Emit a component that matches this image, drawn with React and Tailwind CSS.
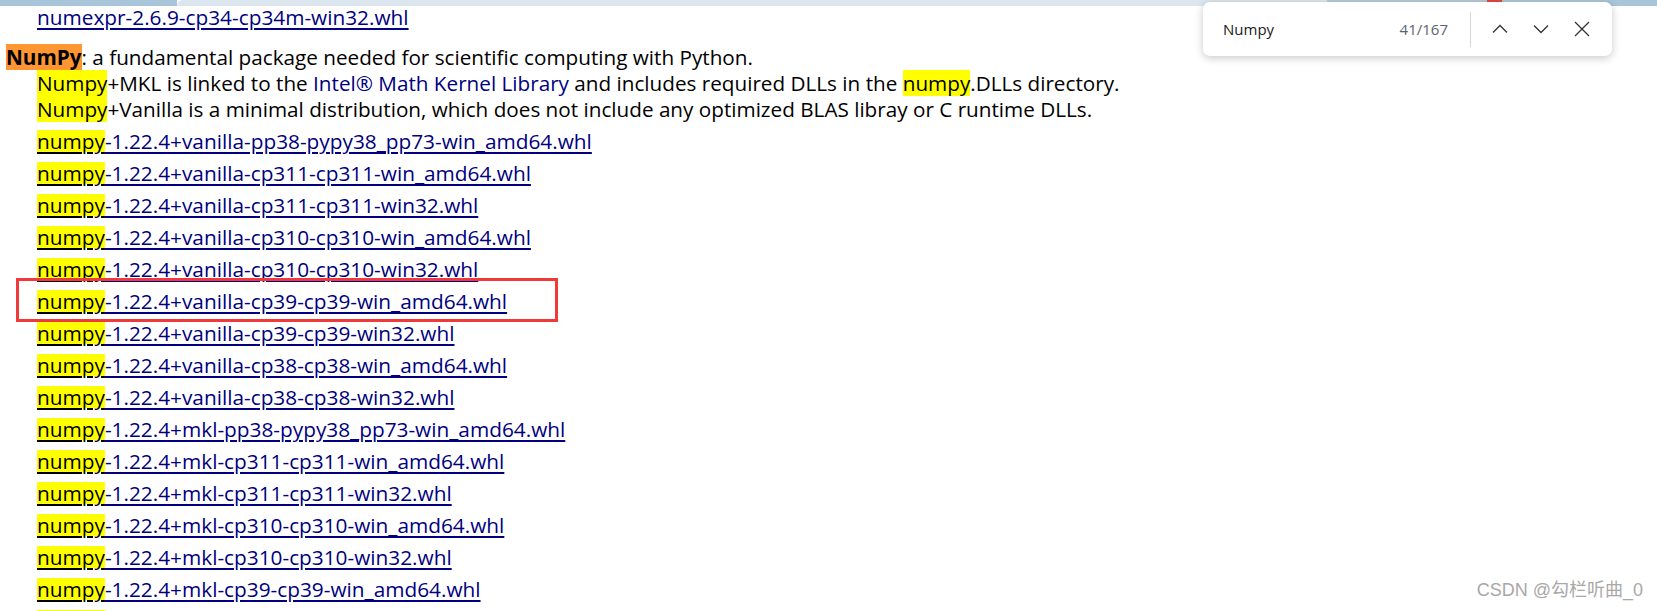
import React from "react";

const rows = [
  "-1.22.4+vanilla-pp38-pypy38_pp73-win_amd64.whl",
  "-1.22.4+vanilla-cp311-cp311-win_amd64.whl",
  "-1.22.4+vanilla-cp311-cp311-win32.whl",
  "-1.22.4+vanilla-cp310-cp310-win_amd64.whl",
  "-1.22.4+vanilla-cp310-cp310-win32.whl",
  "-1.22.4+vanilla-cp39-cp39-win_amd64.whl",
  "-1.22.4+vanilla-cp39-cp39-win32.whl",
  "-1.22.4+vanilla-cp38-cp38-win_amd64.whl",
  "-1.22.4+vanilla-cp38-cp38-win32.whl",
  "-1.22.4+mkl-pp38-pypy38_pp73-win_amd64.whl",
  "-1.22.4+mkl-cp311-cp311-win_amd64.whl",
  "-1.22.4+mkl-cp311-cp311-win32.whl",
  "-1.22.4+mkl-cp310-cp310-win_amd64.whl",
  "-1.22.4+mkl-cp310-cp310-win32.whl",
  "-1.22.4+mkl-cp39-cp39-win_amd64.whl",
  "-1.22.4+mkl-cp39-cp39-win32.whl",
];

function Row({ rest, boxed }) {
  return (
    <div className="relative h-[32px] leading-[32px] whitespace-nowrap">
      <a className="underline decoration-[1.6px] underline-offset-[3px] text-[#000080] decoration-[#000080]">
        <span className="inline-block h-[22px] leading-[22px] bg-[#ffff00] text-black underline decoration-[1.6px] underline-offset-[3px] decoration-black">numpy</span>
        {rest}
      </a>
      {boxed && (
        <div className="absolute left-[-21px] top-[-7px] w-[542px] h-[44px] border-[3px] border-[#f03a3a]" />
      )}
    </div>
  );
}

export default function App() {
  return (
    <div className="relative w-[1657px] h-[611px] overflow-hidden bg-white font-['Open_Sans',sans-serif] text-black">
      {/* browser chrome strip */}
      <div className="flex h-[6px]">
        <div className="w-[177px] bg-[#a9c5da]" />
        <div className="w-[1150px] bg-[#dce6ee] rounded-tl-[6px]" />
        <div className="w-[160px] bg-[#b4c9d8]" />
        <div className="w-[15px] bg-[#e5473f]" />
        <div className="flex-1 bg-[#a9c5da]" />
      </div>

      <div className="pl-[37px] h-[22px] leading-[22px] text-[20.8px] whitespace-nowrap">
        <a className="text-[#000080] underline decoration-[1.6px] underline-offset-[3px]">numexpr-2.6.9-cp34-cp34m-win32.whl</a>
      </div>

      <div className="mt-[16px] text-[20.7px] leading-[26px] whitespace-nowrap">
        <div className="pl-[6px]">
          <span className="inline-block h-[26px] bg-[#ff9632] font-bold">NumPy</span>
          : a fundamental package needed for scientific computing with Python.
        </div>
        <div className="pl-[37px]">
          <span className="inline-block h-[26px] bg-[#ffff00]">Numpy</span>
          +MKL is linked to the <span className="text-[#000080]">Intel® Math Kernel Library</span> and includes required DLLs in the{" "}
          <span className="inline-block h-[26px] bg-[#ffff00]">numpy</span>.DLLs directory.
        </div>
        <div className="pl-[37px]">
          <span className="inline-block h-[26px] bg-[#ffff00]">Numpy</span>
          +Vanilla is a minimal distribution, which does not include any optimized BLAS libray or C runtime DLLs.
        </div>
      </div>

      <div className="mt-[3px] pl-[37px] text-[20.8px]">
        {rows.map((r, i) => (
          <Row key={i} rest={r} boxed={i === 5} />
        ))}
      </div>

      {/* find bar */}
      <div className="absolute left-[1203px] top-[2px] w-[409px] h-[54px] bg-white rounded-[7px] shadow-[0_2px_8px_rgba(0,0,0,0.22)] flex items-center font-['Open_Sans',sans-serif]">
        <div className="flex-1 pl-[20px] text-[15px] text-[#1a1a1a]">Numpy</div>
        <div className="text-[15px] text-[#5b6470]">41/167</div>
        <div className="ml-[22px] w-px h-[35px] bg-[#d6d6d6]" />
        <div className="flex items-center ml-[21px] gap-[25px] pr-[22px]">
          <svg width="16" height="10" viewBox="0 0 16 10" fill="none" stroke="#333" strokeWidth="1.3">
            <polyline points="1,8.5 8,1.5 15,8.5" />
          </svg>
          <svg width="16" height="10" viewBox="0 0 16 10" fill="none" stroke="#333" strokeWidth="1.3">
            <polyline points="1,1.5 8,8.5 15,1.5" />
          </svg>
          <svg width="16" height="16" viewBox="0 0 16 16" fill="none" stroke="#333" strokeWidth="1.3">
            <line x1="1" y1="1" x2="15" y2="15" />
            <line x1="15" y1="1" x2="1" y2="15" />
          </svg>
        </div>
      </div>

      {/* watermark */}
      <div className="absolute right-[14px] bottom-[7px] text-[18px] text-[#a8a8a8] font-['Liberation_Sans','Noto_Sans_CJK_SC',sans-serif] whitespace-nowrap">
        CSDN @勾栏听曲_0
      </div>
    </div>
  );
}
